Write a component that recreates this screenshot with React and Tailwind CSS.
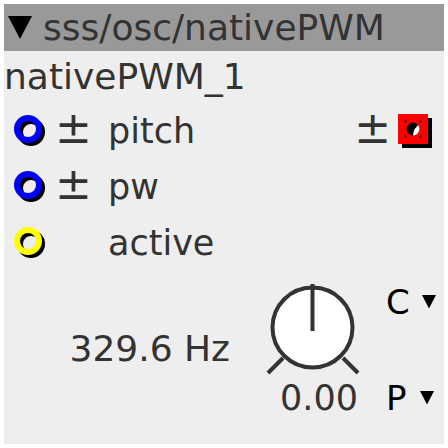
import React from 'react';

function Jack({ color }) {
    return (
        <div className="relative w-[32px] h-[32px]">
            <div className="absolute left-[3px] top-[3px] w-[28px] h-[28px] rounded-full border-[6px] border-black" />
            <div
                className={`absolute left-0 top-0 w-[28px] h-[28px] rounded-full border-[6px] ${
                    color === 'yellow' ? 'border-[#ffff00]' : 'border-[#0000ff]'
                }`}
            />
        </div>
    );
}

function Outlet() {
    return (
        <div className="relative w-[34px] h-[34px]">
            <div className="absolute left-[4px] top-[4px] w-[30px] h-[30px] bg-black" />
            <div className="absolute left-0 top-0 w-[30px] h-[30px] bg-[#ff0000]">
                <svg width="30" height="30" viewBox="0 0 30 30">
                    <circle cx="15" cy="15" r="6.5" fill="#000" />
                    <path d="M16 16 L20 11 A6.5 6.5 0 0 1 15 21.5 Z" fill="#fff" />
                    <path d="M7 9 V7 H9 M21 7 H23 V9 M23 21 V23 H21 M9 23 H7 V21" stroke="#000" strokeWidth="1" fill="none" />
                </svg>
            </div>
        </div>
    );
}

function Knob() {
    return (
        <svg width="96" height="94" viewBox="0 0 96 94">
            <circle cx="48.5" cy="45.5" r="40" fill="#fff" stroke="#333" strokeWidth="4" />
            <line x1="48.5" y1="2" x2="48.5" y2="49" stroke="#333" strokeWidth="4" />
            <line x1="4" y1="91" x2="19" y2="76" stroke="#333" strokeWidth="4" />
            <line x1="79" y1="76" x2="94" y2="91" stroke="#333" strokeWidth="4" />
        </svg>
    );
}

function Arrow({ size }) {
    return (
        <svg width={size} height={size} viewBox="0 0 24 24">
            <polygon points="0,0 24,0 12,23" fill="#000" />
        </svg>
    );
}

export default function App() {
    return (
        <div className="w-[448px] h-[448px] bg-white p-[4px] font-['DejaVu_Sans',sans-serif]">
            <div className="w-[440px] h-[440px] bg-[#eeeeee] text-[#333333] text-[35px] flex flex-col">
                <div className="h-[47px] bg-[#999999] flex items-center pl-[4px] text-[36px] leading-none">
                    <span className="mr-[11px] flex">
                        <Arrow size={24} />
                    </span>
                    <span>sss/osc/nativePWM</span>
                </div>
                <div className="h-[52px] flex items-center text-[36px] leading-none">nativePWM_1</div>
                <div className="flex">
                    <div className="flex flex-col">
                        <div className="h-[56px] flex items-center pl-[10px]">
                            <Jack />
                            <span className="w-[62px] pl-[9px] text-[44px] leading-none -mt-[6px]">±</span>
                            <span>pitch</span>
                        </div>
                        <div className="h-[56px] flex items-center pl-[10px]">
                            <Jack />
                            <span className="w-[62px] pl-[9px] text-[44px] leading-none -mt-[6px]">±</span>
                            <span>pw</span>
                        </div>
                        <div className="h-[56px] flex items-center pl-[10px]">
                            <Jack color="yellow" />
                            <span className="w-[62px]"></span>
                            <span>active</span>
                        </div>
                    </div>
                    <div className="ml-auto h-[56px] flex items-center pr-[12px]">
                        <span className="mr-[7px] text-[44px] leading-none -mt-[6px]">±</span>
                        <Outlet />
                    </div>
                </div>
                <div className="flex items-start">
                    <div className="w-[260px] pt-[60px] pr-[34px] text-right text-[36px] leading-[36px]">329.6 Hz</div>
                    <div className="w-[96px] flex flex-col">
                        <div className="mt-[11px]">
                            <Knob />
                        </div>
                        <div className="mt-[5px] pl-[16px] leading-[35px] whitespace-nowrap">0.00</div>
                    </div>
                    <div className="flex flex-col ml-[26px] text-black text-[34px] leading-[34px]">
                        <div className="mt-[14px] flex items-center gap-[12px]">
                            <span>C</span>
                            <Arrow size={14} />
                        </div>
                        <div className="mt-[62px] flex items-center gap-[13px]">
                            <span>P</span>
                            <Arrow size={14} />
                        </div>
                    </div>
                </div>
            </div>
        </div>
    );
}
